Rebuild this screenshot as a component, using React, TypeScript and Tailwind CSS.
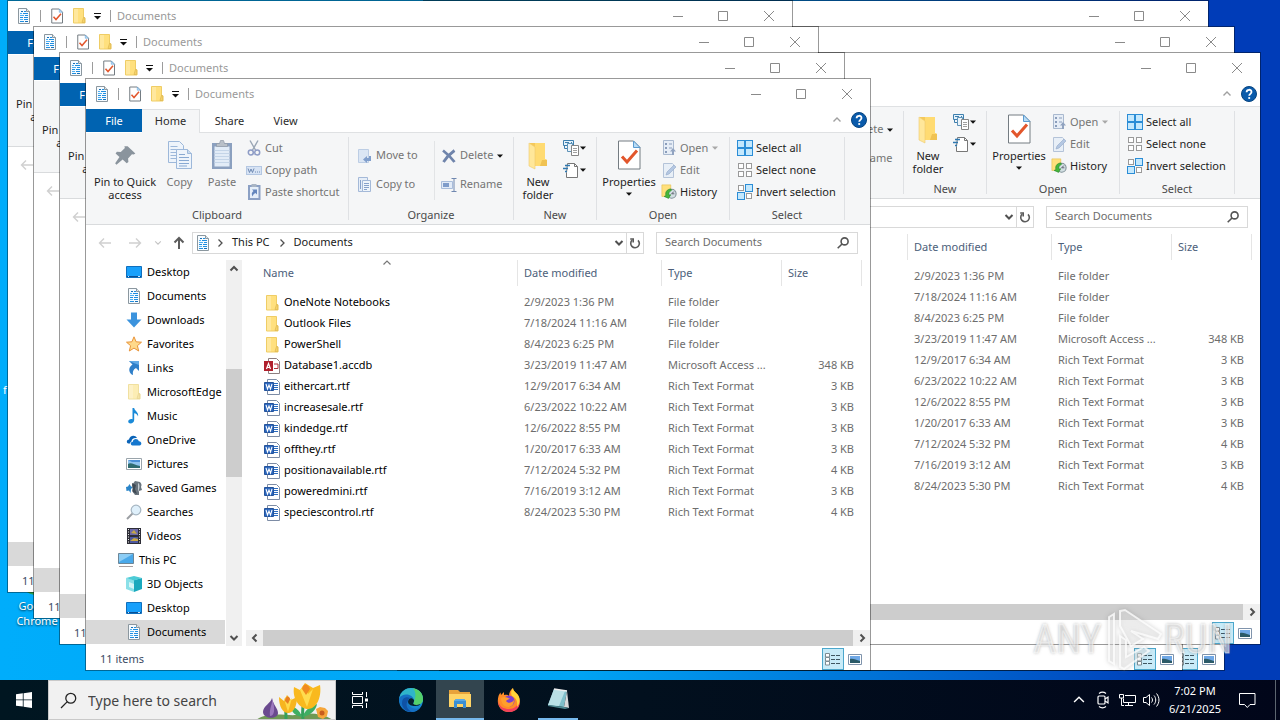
import { useId, type ReactNode } from "react";

const DocIcon = () => (
  <svg width="16" height="16" viewBox="0 0 16 16" aria-hidden="true">
    <path d="M2.500.500h8l3 3v12h-11z" fill="#f6fbff" stroke="#8b979f" />
    <path d="M10.500.500v3h3" fill="#dfe7ec" stroke="#8b979f" />
    <path d="M8 3.500h2M7 5.500h5M9 7.500h3M4 9.500h3M8 9.500h4M8 11.500h4M4 13.500h4" stroke="#1f8ee0" />
    <path d="M4 5.500h2M4 7.500h4M4 11.500h3" stroke="#4fb0f2" />
    <path d="M5 3.500h2M9 13.500h3" stroke="#1670b8" />
  </svg>
);

const CheckDocIcon = ({ size = 16 }: { size?: number }) => (
  <svg width={size} height={size} viewBox="0 0 32 32" aria-hidden="true">
    <path d="M5.500 2h15l6.500 6.500V30H5.500z" fill="#fff" stroke="#747c82" strokeWidth={size > 20 ? 1 : 2} />
    <path d="M20.500 2v6.500H27z" fill="#b9dcf5" stroke="#5b9bd0" />
    <path d="M9 17.500l5 5.500L24 11.500" fill="none" stroke="#e2562c" strokeWidth="3" />
  </svg>
);

const FolderIcon = ({ pale = false }: { pale?: boolean }) => (
  <svg width="16" height="16" viewBox="0 0 16 16" aria-hidden="true">
    <path d="M2.500.500h10v9.500h1.500v5H2.500z" fill={pale ? "#fcedb4" : "#ffe07e"} stroke={pale ? "#f0e0a0" : "#efcd65"} />
    <path d="M12.500 9.500h1.200v5h-2.700z" fill={pale ? "#f6e5a6" : "#f6d36a"} stroke={pale ? "#e6d290" : "#dcb650"} strokeWidth=".7" />
    <path d="M3 1h4v13.500H3z" fill="#fff" opacity=".25" />
  </svg>
);

const BigFolderIcon = () => (
  <svg width="32" height="32" viewBox="0 0 32 32" aria-hidden="true">
    <path d="M8 4h15v16l2 1v6H8z" fill="#f5c95a" />
    <path d="M13 4h10v16l2 1v6H13z" fill="#ffdb72" />
    <path d="M7 4l6 4v22l-6-3z" fill="#ffe79a" stroke="#eecb6d" strokeWidth=".6" />
    <path d="M20 21h5v6h-7z" fill="#f0c252" />
  </svg>
);

const Caret = ({ muted = false }: { muted?: boolean }) => (
  <svg width="6" height="4" viewBox="0 0 6 4" aria-hidden="true">
    <path d="M0 .5h6L3 3.700z" fill={muted ? "#a8a8a8" : "#111"} />
  </svg>
);

const PinIcon = () => (
  <svg width="32" height="32" viewBox="0 0 32 32" aria-hidden="true">
    <path d="M20.500 6l9 8.500-2 1.300-2-.5-4.500 5 .4 4.200-2 1.500-4.700-4.500L7.500 27.500 6 26l5-7.500-4.500-4 1.500-2 4.500.3 4.800-4.600-.6-2.200z" transform="translate(1 2) scale(.86)" fill="#8a949d" />
  </svg>
);

const CopyIcon = () => (
  <svg width="32" height="32" viewBox="0 0 32 32" aria-hidden="true" fill="#eef4fb" stroke="#9db8da">
    <path d="M4.500 2.500h11l4 4v17h-15z" />
    <path d="M6.500 7.500h7M6.500 10.500h9M6.500 13.500h9M6.500 16.500h9M6.500 19.500h9" />
    <path d="M12.500 10.500h11l4 4v15h-15z" />
    <path d="M23.500 10.500v4h4" fill="#c8daee" />
    <path d="M15 15.500h6M15 18.500h10M15 21.500h10M15 24.500h10M15 27h8" stroke="#88a9d2" />
  </svg>
);

const PasteIcon = () => (
  <svg width="32" height="32" viewBox="0 0 32 32" aria-hidden="true">
    <rect x="6" y="4" width="20" height="26" fill="#8ba0bf" />
    <rect x="8.500" y="7.500" width="15" height="20" fill="#e2ecf7" />
    <path d="M8.500 11.500h15M8.500 14.500h15M8.500 17.500h15M8.500 20.500h15M8.500 23.500h15" stroke="#c4d5e8" />
    <path d="M10.500 4.500h3l1-3h3l1 3h3v3h-11z" fill="#b9c0c8" stroke="#8f9aa6" strokeWidth=".7" />
  </svg>
);

const CutIcon = () => (
  <svg width="16" height="16" viewBox="0 0 16 16" aria-hidden="true" fill="none">
    <path d="M4 .500L10 11M12 .500L6 11" stroke="#9aa6b5" strokeWidth="1.400" />
    <circle cx="4.800" cy="12.500" r="2.500" stroke="#8e9cc6" strokeWidth="1.500" />
    <circle cx="11.200" cy="12.500" r="2.500" stroke="#8e9cc6" strokeWidth="1.500" />
  </svg>
);

const CopyPathIcon = () => (
  <svg width="16" height="16" viewBox="0 0 16 16" aria-hidden="true">
    <rect x=".5" y="4.500" width="15" height="8" fill="#d7e3f4" stroke="#b4c7e2" />
    <path d="M2 6.500l1.500 4L5 7l1.500 3.500L8 6.500M9 10h1M11 10h1M13 10h1" fill="none" stroke="#6f8ab3" />
  </svg>
);

const PasteShortcutIcon = () => (
  <svg width="16" height="16" viewBox="0 0 16 16" aria-hidden="true">
    <path d="M3 2h10.500v13H3z" fill="#e6eff9" stroke="#8ba0c4" strokeWidth="2" />
    <path d="M5.500 0h5v3h-5z" fill="#a9b5c4" />
    <path d="M6 5.500h5v5L9.500 9C7.500 10 7 11 6.800 12.500 5.200 10.500 5.500 8.500 7.500 7z" fill="#6486bd" />
  </svg>
);

const MoveToIcon = () => (
  <svg width="16" height="16" viewBox="0 0 16 16" aria-hidden="true">
    <path d="M1.500 1.500h10v13h-10z" fill="#dbe6f4" stroke="#bccde4" />
    <path d="M6 11.500l4-3.500v2h2V8h2v5h-4v2z" fill="#819fcc" />
  </svg>
);

const CopyToIcon = () => (
  <svg width="16" height="16" viewBox="0 0 16 16" aria-hidden="true" stroke="#a4b9d8">
    <path d="M1.500.500h9v14h-9z" fill="#e6eef8" />
    <path d="M5.500 3.500h8v11h-8z" fill="#eff5fb" />
    <path d="M3.500 3v9M7 6.500h5M7 8.500h5M7 10.500h5M7 12.500h3" stroke="#86a1ca" />
  </svg>
);

const DeleteIcon = () => (
  <svg width="16" height="16" viewBox="0 0 16 16" aria-hidden="true">
    <path d="M2 2.500Q8 7 13.500 14M13.500 2.500Q7 7 2.500 14" stroke="#6f84ab" strokeWidth="2.800" fill="none" />
  </svg>
);

const RenameIcon = () => (
  <svg width="16" height="16" viewBox="0 0 16 16" aria-hidden="true">
    <path d="M.5 4.500h11v7H.500z" fill="#e2ebf7" stroke="#a9bddb" />
    <path d="M2 6h6v4H2z" fill="#7f9cca" />
    <path d="M10.500 1.500h5M13 1.500v13M10.500 14.500h5" stroke="#7088b0" />
  </svg>
);

const NewItemIcon = () => (
  <svg width="16" height="16" viewBox="0 0 16 16" aria-hidden="true">
    <path d="M.5.500h10v5H.500z" fill="#e4f2fb" stroke="#3d7fae" />
    <path d="M2 2.500h4M8 2.500h1M1.500 5.500v3h3" stroke="#3d7fae" fill="none" />
    <path d="M4.500 3.500h5v8h-5z" fill="#eaf4fb" stroke="#5f93b8" />
    <path d="M8.500 5.500h7v10h-7z" fill="#fff" stroke="#858585" />
    <path d="M10 8.500h4M10 10.500h4M10 12.500h4" stroke="#a0a0a0" />
  </svg>
);

const EasyAccessIcon = () => (
  <svg width="16" height="16" viewBox="0 0 16 16" aria-hidden="true">
    <path d="M4.500 1.500h7l3 3v11h-11v-5z" fill="#fff" stroke="#777" />
    <path d="M11.500 1.500v3h3" fill="none" stroke="#777" />
    <path d="M2 3.500h5M0 6.500h5M2 9.500h2" stroke="#2f78b0" strokeWidth="1.300" />
  </svg>
);

const OpenIcon = () => (
  <svg width="16" height="16" viewBox="0 0 16 16" aria-hidden="true">
    <path d="M2.500.500h10v14h-10z" fill="#e6edf6" stroke="#a9b9cf" />
    <path d="M4 3h2v2H4zM4 7h2v2H4zM4 11h2v2H4z" fill="#8a9dbb" />
    <path d="M8 4h3M8 8h3" stroke="#8a9dbb" />
    <path d="M11 15v-3.500H9L12 8l3 3.500h-2V15z" fill="#91a3c0" />
  </svg>
);

const EditIcon = () => (
  <svg width="16" height="16" viewBox="0 0 16 16" aria-hidden="true">
    <path d="M2.500 1.500h9l1 1v13h-10z" fill="#e8eff7" stroke="#b4c3d8" />
    <path d="M5 13l1-3 7-7 2 2-7 7z" fill="#b4c7e2" stroke="#93a9c9" strokeWidth=".6" />
  </svg>
);

const HistoryIcon = () => (
  <svg width="18" height="16" viewBox="0 0 18 16" aria-hidden="true">
    <path d="M1 0h10v13H1z" fill="#ffe07c" stroke="#e5bf50" strokeWidth=".7" />
    <circle cx="12" cy="10" r="5" fill="#d3dfe3" stroke="#7e8f96" strokeWidth="1.200" />
    <path d="M12 10l2.500-2.500M12 10h3" stroke="#556" />
    <path d="M11 4.500C6.500 5 4.500 8 5.500 12l-2 1 5 2.200L11 11l-2 .5C8.500 9.500 9 7.500 12 6z" fill="#45b53b" stroke="#1f8326" strokeWidth=".6" />
  </svg>
);

function SelectIcon({ filled }: { filled: [boolean, boolean, boolean, boolean] }) {
  const cells = [[0, 0], [8, 0], [0, 8], [8, 8]];
  return (
    <svg width="16" height="16" viewBox="0 0 16 16" aria-hidden="true">
      {cells.map(([x, y], i) =>
        filled[i] ? (
          <rect key={i} x={x + 0.5} y={y + 0.5} width="7" height="7" fill="#c4e8fd" stroke="#2b8dd6" />
        ) : (
          <rect key={i} x={x + 1.5} y={y + 1.5} width="5" height="5" fill="#fff" stroke="#9a9a9a" />
        ),
      )}
    </svg>
  );
}

const HelpIcon = () => (
  <svg width="16" height="16" viewBox="0 0 16 16" aria-hidden="true">
    <circle cx="8" cy="8" r="7.500" fill="#0a5bab" stroke="#07447f" />
    <path d="M5.600 6.200C5.600 3 10.500 3 10.500 6c0 1.800-2.300 1.900-2.300 3.800" fill="none" stroke="#fff" strokeWidth="1.800" />
    <circle cx="8.200" cy="12" r="1.100" fill="#fff" />
  </svg>
);

const MagnifierIcon = ({ size = 12, color = "#555", width = 1.6 }: { size?: number; color?: string; width?: number }) => (
  <svg width={size} height={size} viewBox="0 0 12 12" aria-hidden="true" fill="none" stroke={color} strokeWidth={width}>
    <circle cx="7.600" cy="4.400" r="3.500" />
    <path d="M5 7L.7 11.300" />
  </svg>
);

type Dir = "up" | "down" | "left" | "right";
const chevronPaths: Record<Dir, string> = {
  up: "M1.500 6.500L5 3l3.500 3.500",
  down: "M1.500 3L5 6.500 8.500 3",
  left: "M6.500 1.500L3 5l3.500 3.500",
  right: "M3.500 1.500L7 5 3.500 8.500",
};
const Chevron = ({ dir, color = "#505050", width = 2, size = 10 }: { dir: Dir; color?: string; width?: number; size?: number }) => (
  <svg width={size} height={size} viewBox="0 0 10 10" aria-hidden="true">
    <path d={chevronPaths[dir]} fill="none" stroke={color} strokeWidth={width} />
  </svg>
);

const Arrow = ({ d, color, width }: { d: string; color: string; width: number }) => (
  <svg width="14" height="14" viewBox="0 0 14 14" aria-hidden="true">
    <path d={d} fill="none" stroke={color} strokeWidth={width} />
  </svg>
);

const DesktopIcon = () => (
  <svg width="16" height="16" viewBox="0 0 16 16" aria-hidden="true">
    <path d="M.5 2.500h15v11H.500z" fill="#18a0fb" stroke="#0f6fbd" />
    <path d="M1 12.500h14" stroke="#0a4f94" />
    <path d="M2 12.500h1M12 12.500h2" stroke="#cfe8fb" />
  </svg>
);
const DownloadIcon = () => (
  <svg width="16" height="16" viewBox="0 0 16 16" aria-hidden="true">
    <path d="M5 .5h6v7h4.500L8 15.500.5 7.500H5z" fill="#3b93dd" />
  </svg>
);
const StarIcon = () => (
  <svg width="16" height="16" viewBox="0 0 16 16" aria-hidden="true">
    <path d="M8 .8l2.100 5 5.400.4-4.100 3.500 1.300 5.300L8 12.100 3.300 15l1.300-5.300L.5 6.200l5.400-.4z" fill="#ffd98a" stroke="#e8943a" />
  </svg>
);
const LinksIcon = () => (
  <svg width="16" height="16" viewBox="0 0 16 16" aria-hidden="true">
    <path d="M3 1h10v10l-3-3c-3 1.500-3.500 4-3 7C3.500 14 1 8 6.500 4.500z" fill="#2f7fc9" />
    <path d="M3 1h10v4L9 3.500z" fill="#62aae6" />
  </svg>
);
const MusicIcon = () => (
  <svg width="16" height="16" viewBox="0 0 16 16" aria-hidden="true">
    <path d="M6.500 0h1.700c.3 3 4.800 4 3.800 8.500-.4-2-2-3-3.800-3.300V12c0 4-6 4.500-6 1.500 0-2 2.500-3 4.300-2.300z" fill="#1a8ad8" />
  </svg>
);
const OneDriveIcon = () => (
  <svg width="16" height="16" viewBox="0 0 16 16" aria-hidden="true">
    <path d="M2.500 11.500C0 11 .5 7.500 3 7.500 3.500 3.500 9 2 11 6 7.500 5.500 5.500 7 5.500 9.500c-1 .3-1.500 1.200-1.200 2z" fill="#0b64b8" />
    <path d="M6.500 13.500c-2.500-.5-2-3.800.3-3.800.3-3.500 5.200-3.700 6-.5 3-.2 3.400 4 .8 4.300z" fill="#1577ce" />
  </svg>
);
const PicturesIcon = () => (
  <svg width="16" height="16" viewBox="0 0 16 16" aria-hidden="true">
    <path d="M.5 2.500h15v11H.500z" fill="#fff" stroke="#9aa4ab" />
    <path d="M2 4h12v8H2z" fill="#8fc3ee" />
    <path d="M2 8c3-2 6 1 12 2v2H2z" fill="#2f6c70" />
    <path d="M2 4h12v2H6z" fill="#4a8fd6" />
  </svg>
);
const GamesIcon = () => (
  <svg width="16" height="16" viewBox="0 0 16 16" aria-hidden="true">
    <path d="M0 7l2-.500 1.500-2.500 1.500 2.500 2 .5-2 2L4.500 13 3 10.500.500 11z" fill="#2a85c9" />
    <path d="M9 1l5 1c1.500 1.500 2 3 1 5l1 3-3 1v4H9l-3-4 1-3-1-3z" fill="#69747d" />
    <path d="M6 3l4 2-1 4 2 5-4-2z" fill="#3f4a54" />
    <path d="M12 3c2 1 2 5 0 9z" fill="#c6ced4" />
  </svg>
);
const SearchesIcon = () => (
  <svg width="16" height="16" viewBox="0 0 16 16" aria-hidden="true">
    <path d="M7 9L1 15" stroke="#9b9fa3" strokeWidth="2" />
    <circle cx="10" cy="6" r="4.800" fill="#dff0fb" stroke="#a6b6c2" strokeWidth="1.200" />
  </svg>
);
const VideosIcon = () => (
  <svg width="16" height="16" viewBox="0 0 16 16" aria-hidden="true">
    <path d="M1 0h14v16H1z" fill="#2d2d36" />
    <path d="M2.500 1v15M13.500 1v15" stroke="#eee" strokeDasharray="1 1.500" />
    <path d="M4 1h8v6H4z" fill="#6d6aa8" />
    <path d="M4 9h8v6H4z" fill="#4e58a0" />
    <path d="M5 5l3-3 3 4zM4 13l4-3 4 1v2z" fill="#c8a843" />
  </svg>
);
const ThisPcIcon = () => (
  <svg width="16" height="16" viewBox="0 0 16 16" aria-hidden="true">
    <path d="M.5 1.500h15v10H.500z" fill="#4aa9ea" stroke="#6d8798" />
    <path d="M1 2h14L1 10z" fill="#8ccdf5" />
    <path d="M1 14.500h14" stroke="#a8a0a0" />
  </svg>
);
const CubeIcon = () => (
  <svg width="16" height="16" viewBox="0 0 16 16" aria-hidden="true">
    <path d="M0 2l8 2v12l-8-3z" fill="#8be0e8" />
    <path d="M8 4l8-2v11l-8 3z" fill="#1ba9bd" />
    <path d="M0 2l8-2 8 2-8 2.500z" fill="#4ccbd6" />
    <path d="M3 6l5 2v5l-5-2z" fill="#d6f6f8" />
  </svg>
);

const WordIcon = () => (
  <svg width="16" height="16" viewBox="0 0 16 16" aria-hidden="true">
    <path d="M3.500.500h9l3 3v12h-12z" fill="#fff" stroke="#7d8ca5" />
    <path d="M10 4.500h4M10 6.500h4M10 8.500h4M10 10.500h4" stroke="#2b6cc0" />
    <path d="M.5 3.500h9v8H.500z" fill="#2b66bd" stroke="#24539b" />
    <path d="M2 5L3.500 10 5 6l1.500 4L8 5" fill="none" stroke="#fff" strokeWidth="1.100" />
  </svg>
);
const AccessIcon = () => (
  <svg width="16" height="16" viewBox="0 0 16 16" aria-hidden="true">
    <path d="M4.500.500h8l3 3v12h-11z" fill="#fff" stroke="#8c7f80" />
    <path d="M10 6h4v4.500h-4" stroke="#b0303a" fill="none" />
    <path d="M0 3h9v10H0z" fill="#b0202d" />
    <path d="M2.500 11l2-5.500 2 5.500M3 9.500h3" fill="none" stroke="#fff" strokeWidth="1.200" />
  </svg>
);

const treeItems: { label: string; icon: ReactNode; root?: boolean; selected?: boolean }[] = [
  { label: "Desktop", icon: <DesktopIcon /> },
  { label: "Documents", icon: <DocIcon /> },
  { label: "Downloads", icon: <DownloadIcon /> },
  { label: "Favorites", icon: <StarIcon /> },
  { label: "Links", icon: <LinksIcon /> },
  { label: "MicrosoftEdge", icon: <FolderIcon pale /> },
  { label: "Music", icon: <MusicIcon /> },
  { label: "OneDrive", icon: <OneDriveIcon /> },
  { label: "Pictures", icon: <PicturesIcon /> },
  { label: "Saved Games", icon: <GamesIcon /> },
  { label: "Searches", icon: <SearchesIcon /> },
  { label: "Videos", icon: <VideosIcon /> },
  { label: "This PC", icon: <ThisPcIcon />, root: true },
  { label: "3D Objects", icon: <CubeIcon /> },
  { label: "Desktop", icon: <DesktopIcon /> },
  { label: "Documents", icon: <DocIcon />, selected: true },
];

const files: [string, string, string, string][] = [
  ["OneNote Notebooks", "2/9/2023 1:36 PM", "File folder", ""],
  ["Outlook Files", "7/18/2024 11:16 AM", "File folder", ""],
  ["PowerShell", "8/4/2023 6:25 PM", "File folder", ""],
  ["Database1.accdb", "3/23/2019 11:47 AM", "Microsoft Access ...", "348 KB"],
  ["eithercart.rtf", "12/9/2017 6:34 AM", "Rich Text Format", "3 KB"],
  ["increasesale.rtf", "6/23/2022 10:22 AM", "Rich Text Format", "3 KB"],
  ["kindedge.rtf", "12/6/2022 8:55 PM", "Rich Text Format", "3 KB"],
  ["offthey.rtf", "1/20/2017 6:33 AM", "Rich Text Format", "3 KB"],
  ["positionavailable.rtf", "7/12/2024 5:32 PM", "Rich Text Format", "4 KB"],
  ["poweredmini.rtf", "7/16/2019 3:12 AM", "Rich Text Format", "3 KB"],
  ["speciescontrol.rtf", "8/24/2023 5:30 PM", "Rich Text Format", "4 KB"],
];

function fileIcon(name: string) {
  if (name.endsWith(".rtf")) return <WordIcon />;
  if (name.endsWith(".accdb")) return <AccessIcon />;
  return <FolderIcon />;
}

function BigButton({ icon, label, className }: { icon: ReactNode; label: string; className: string }) {
  return (
    <button type="button" className={`flex flex-col items-center gap-1 pt-[6px] text-center leading-[13px] ${className}`}>
      {icon}
      <span>{label}</span>
    </button>
  );
}

function SmallButton({ icon, label, tall = false, muted = false, caret = false }: { icon: ReactNode; label: string; tall?: boolean; muted?: boolean; caret?: boolean }) {
  return (
    <button type="button" className={`flex items-center gap-[3px] whitespace-nowrap ${tall ? "h-[29px]" : "h-[22px]"} ${muted ? "text-[#747474]" : "text-[#1e1e1e]"}`}>
      <span className="flex w-4 justify-center">{icon}</span>
      {label}
      {caret && <span className="pl-px"><Caret muted={label === "Open"} /></span>}
    </button>
  );
}

function Group({ title, className, children }: { title: string; className: string; children: ReactNode }) {
  return (
    <section className={`flex shrink-0 flex-col ${className}`}>
      <div className="flex h-[75px]">{children}</div>
      <h3 className="text-center leading-[14px] text-[#4a4a4a]">{title}</h3>
    </section>
  );
}

const Divider = () => <div className="my-1 w-px shrink-0 bg-[#dfe1e4]" />;

const PinButton = () => (
  <BigButton icon={<PinIcon />} label="Pin to Quick access" className="ml-[6px] w-[66px] shrink-0 text-[#1e1e1e]" />
);

function RibbonGroups() {
  return (
    <>
      <Group title="Clipboard" className="w-[262px]">
        <PinButton />
        <BigButton icon={<CopyIcon />} label="Copy" className="w-[43px] text-[#747474]" />
        <BigButton icon={<PasteIcon />} label="Paste" className="w-[42px] text-[#747474]" />
        <div className="ml-[3px] pt-1">
          <SmallButton icon={<CutIcon />} label="Cut" muted />
          <SmallButton icon={<CopyPathIcon />} label="Copy path" muted />
          <SmallButton icon={<PasteShortcutIcon />} label="Paste shortcut" muted />
        </div>
      </Group>
      <Divider />
      <Group title="Organize" className="w-[164px]">
        <div className="w-[85px] pt-2 pl-2">
          <SmallButton icon={<MoveToIcon />} label="Move to" tall muted />
          <SmallButton icon={<CopyToIcon />} label="Copy to" tall muted />
        </div>
        <div className="my-2 border-l border-[#e2e4e6] pl-[6px]">
          <SmallButton icon={<DeleteIcon />} label="Delete" tall muted caret />
          <SmallButton icon={<RenameIcon />} label="Rename" tall muted />
        </div>
      </Group>
      <Divider />
      <Group title="New" className="w-[82px]">
        <BigButton icon={<BigFolderIcon />} label="New folder" className="ml-1 w-10 text-[#1e1e1e]" />
        <div className="ml-[5px] pt-1">
          <button type="button" aria-label="New item" className="flex h-[22px] items-center gap-px">
            <NewItemIcon /><Caret />
          </button>
          <button type="button" aria-label="Easy access" className="flex h-[22px] items-center gap-px">
            <EasyAccessIcon /><Caret />
          </button>
        </div>
      </Group>
      <Divider />
      <Group title="Open" className="w-[132px]">
        <button type="button" className="ml-[2px] flex w-[60px] flex-col items-center gap-1 pt-[6px] leading-[13px] text-[#1e1e1e]">
          <CheckDocIcon size={32} />
          Properties
          <Caret />
        </button>
        <div className="ml-[2px] pt-1">
          <SmallButton icon={<OpenIcon />} label="Open" muted caret />
          <SmallButton icon={<EditIcon />} label="Edit" muted />
          <SmallButton icon={<HistoryIcon />} label="History" />
        </div>
      </Group>
      <Divider />
      <Group title="Select" className="w-[114px]">
        <div className="ml-[7px] pt-1">
          <SmallButton icon={<SelectIcon filled={[true, true, true, true]} />} label="Select all" />
          <SmallButton icon={<SelectIcon filled={[false, false, false, false]} />} label="Select none" />
          <SmallButton icon={<SelectIcon filled={[false, true, true, false]} />} label="Invert selection" />
        </div>
      </Group>
      <Divider />
    </>
  );
}

function AddressBar({ searchId }: { searchId: string }) {
  return (
    <>
      <button type="button" aria-label="Forward" className="ml-4"><Arrow d="M1 7h11M8 2.500L12.500 7 8 11.500" color="#d0d0d0" width={1.4} /></button>
      <button type="button" aria-label="Recent locations" className="ml-3"><Chevron dir="down" color="#c4c4c4" width={1.4} size={8} /></button>
      <button type="button" aria-label="Up" className="ml-[10px]"><Arrow d="M7 13V2M2.500 6.500L7 2l4.500 4.500" color="#5c5c5c" width={2} /></button>
      <div className="ml-[6px] flex h-[22px] flex-1 items-center border border-[#d9d9d9] pl-[2px] text-[#1a1a1a]">
        <DocIcon />
        <span className="ml-1 flex"><Chevron dir="right" width={1.3} /></span>
        <a href="#this-pc" className="ml-[7px]">This PC</a>
        <span className="ml-[7px] flex"><Chevron dir="right" width={1.3} /></span>
        <a href="#documents" className="ml-[7px] flex-1">Documents</a>
        <button type="button" aria-label="Previous locations" className="flex w-[14px] justify-center"><Chevron dir="down" /></button>
        <button type="button" aria-label="Refresh" className="flex h-full w-[17px] items-center justify-center border-l border-[#d9d9d9]">
          <svg width="12" height="12" viewBox="0 0 12 12" aria-hidden="true" fill="none" stroke="#5a5a5a" strokeWidth="1.600">
            <path d="M9 3.300A4.300 4.300 0 1 1 3.200 3.200" /><path d="M1.200 2h3v3.600" />
          </svg>
        </button>
      </div>
      <div className="ml-3 flex h-[22px] w-[202px] items-center border border-[#d9d9d9] pr-2 pl-2">
        <label htmlFor={searchId} className="sr-only">Search</label>
        <input id={searchId} type="search" placeholder="Search Documents" className="min-w-0 flex-1 bg-transparent outline-none placeholder:text-[#6d6d6d]" />
        <MagnifierIcon />
      </div>
    </>
  );
}

function FileTable() {
  return (
    <table className="w-[616px] table-fixed border-separate border-spacing-0 text-left text-[#6d6d6d]">
      <colgroup>
        <col className="w-[272px]" /><col className="w-[144px]" /><col className="w-[120px]" /><col className="w-20" />
      </colgroup>
      <thead className="text-[#4c607a]">
        <tr className="h-8 align-top">
          <th className="relative p-0 font-normal">
            <span className="absolute top-0 left-[136px] flex h-[5px] items-center"><Chevron dir="up" color="#777" width={1.2} /></span>
            <div className="flex h-[26px] items-center border-r border-[#e5e5e5] pl-[17px]">Name</div>
          </th>
          <th className="p-0 font-normal"><div className="flex h-[26px] items-center border-r border-[#e5e5e5] pl-[6px]">Date modified</div></th>
          <th className="p-0 font-normal"><div className="flex h-[26px] items-center border-r border-[#e5e5e5] pl-[6px]">Type</div></th>
          <th className="p-0 font-normal"><div className="flex h-[26px] items-center border-r border-[#e5e5e5] pl-[6px]">Size</div></th>
        </tr>
      </thead>
      <tbody>
        {files.map(([name, date, type, size]) => (
          <tr key={name} className="h-[21px]">
            <td className="p-0 pl-[18px] text-black"><span className="flex h-[21px] items-center gap-1">{fileIcon(name)}{name}</span></td>
            <td className="p-0 pl-[6px]">{date}</td>
            <td className="p-0 pl-[6px]">{type}</td>
            <td className="p-0 pr-2 text-right">{size}</td>
          </tr>
        ))}
      </tbody>
    </table>
  );
}

/** `frameOnly` skips the file list and most of the ribbon for windows that sit deep in the stack. */
function ExplorerWindow({ place, frameOnly = false }: { place: string; frameOnly?: boolean }) {
  const searchId = useId();
  return (
    <article className={`absolute flex h-[593px] w-[786px] flex-col overflow-hidden border border-black/40 bg-white bg-clip-padding text-[11px] ${place}`}>
      <header className="flex h-[30px] shrink-0 items-center pl-2">
        <DocIcon />
        <span className="ml-2 h-3 w-px bg-[#9c9c9c]" />
        <span className="ml-2"><CheckDocIcon /></span>
        <span className="ml-[6px]"><FolderIcon /></span>
        <button type="button" aria-label="Customize toolbar" className="ml-[7px]">
          <svg width="8" height="8" viewBox="0 0 8 8" aria-hidden="true"><path d="M0 1.500h7" stroke="#111" /><path d="M0 4h7L3.500 7.500z" fill="#111" /></svg>
        </button>
        <span className="ml-2 h-3 w-px bg-[#9c9c9c]" />
        <h2 className="ml-[6px] flex-1 text-[#999]">Documents</h2>
        <button type="button" aria-label="Minimize" className="flex w-11 justify-center">
          <svg width="10" height="10" viewBox="0 0 10 10" aria-hidden="true"><path d="M0 5.500h10" stroke="#8a8a8a" /></svg>
        </button>
        <button type="button" aria-label="Maximize" className="flex w-[46px] justify-center">
          <svg width="10" height="10" viewBox="0 0 10 10" aria-hidden="true"><path d="M.5.500h9v9h-9z" fill="none" stroke="#8a8a8a" /></svg>
        </button>
        <button type="button" aria-label="Close" className="flex w-[46px] justify-center">
          <svg width="10" height="10" viewBox="0 0 10 10" aria-hidden="true"><path d="M0 0l10 10M10 0L0 10" stroke="#8a8a8a" /></svg>
        </button>
      </header>

      <nav className="flex h-6 shrink-0 items-stretch text-[#2b2b2b]">
        <button type="button" className="mb-px w-14 bg-[#0063b1] pt-px text-white">File</button>
        {!frameOnly && (
          <>
            <button type="button" className="w-[58px] border-t border-r border-[#dfe1e3] bg-[#f5f6f7]">Home</button>
            <button type="button" className="w-[59px] border-b border-[#dfe1e3] pt-px">Share</button>
            <button type="button" className="w-[53px] border-b border-[#dfe1e3] pt-px">View</button>
          </>
        )}
        <div className="flex flex-1 items-center justify-end gap-[9px] border-b border-[#dfe1e3] pr-[3px] pb-px">
          <button type="button" aria-label="Collapse ribbon"><Chevron dir="up" color="#a0a0a0" width={1.4} /></button>
          <button type="button" aria-label="Help"><HelpIcon /></button>
        </div>
      </nav>

      <div className="flex h-[92px] shrink-0 border-b border-[#d9dbdd] bg-[#f5f6f7]">
        {frameOnly ? <PinButton /> : <RibbonGroups />}
      </div>

      <div className="flex h-[35px] shrink-0 items-center px-3">
        <button type="button" aria-label="Back"><Arrow d="M13 7H2M6 2.500L1.500 7 6 11.500" color="#d0d0d0" width={1.4} /></button>
        {!frameOnly && <AddressBar searchId={searchId} />}
      </div>

      <div className="flex h-[386px] shrink-0">
        {frameOnly ? (
          <div className="mb-[2px] h-6 w-[139px] self-end bg-[#d9d9d9]" />
        ) : (
          <>
            <ul className="w-[139px] shrink-0 overflow-hidden text-black">
              {treeItems.map((item, i) => (
                <li key={i}>
                  <button type="button" className={`flex h-6 w-full items-center gap-[5px] whitespace-nowrap ${item.root ? "pl-8" : "pl-10"} ${item.selected ? "bg-[#d9d9d9]" : ""}`}>
                    <span className="shrink-0">{item.icon}</span>
                    {item.label}
                  </button>
                </li>
              ))}
            </ul>
            <div className="ml-px flex w-4 shrink-0 flex-col items-center bg-[#f0f0f0]">
              <button type="button" aria-label="Scroll up" className="flex h-[17px] items-center"><Chevron dir="up" /></button>
              <div className="mt-[92px] h-[108px] w-full bg-[#cdcdcd]" />
              <button type="button" aria-label="Scroll down" className="mt-auto flex h-[17px] items-center"><Chevron dir="down" /></button>
            </div>
            <div className="flex min-w-0 flex-1 flex-col pl-1">
              <FileTable />
              <div className="mt-auto flex h-4 items-center bg-[#f0f0f0]">
                <button type="button" aria-label="Scroll left" className="flex w-[17px] justify-center"><Chevron dir="left" /></button>
                <div className="h-full flex-1 bg-[#cdcdcd]" />
                <button type="button" aria-label="Scroll right" className="flex w-[17px] justify-center"><Chevron dir="right" /></button>
              </div>
            </div>
          </>
        )}
      </div>

      <footer className="flex flex-1 items-center pt-[2px] pr-2 pl-[14px] text-[#3a4a63]">
        <p className="flex-1">11 items</p>
        <button type="button" aria-label="Details view" className="flex h-full w-[22px] items-center justify-center border border-[#4ba7cc] bg-[#c8ebf8]">
          <svg width="16" height="13" viewBox="0 0 16 13" aria-hidden="true">
            <path d="M.5.500h4v3.500h-4zM.5 4.500h4V8h-4zM.5 8.500h4V12h-4z" fill="#fff" stroke="#7c8c93" />
            <path d="M6 2.500h4M11 2.500h4M6 6.500h4M11 6.500h4M6 10.500h4M11 10.500h4" stroke="#3f5661" />
          </svg>
        </button>
        <button type="button" aria-label="Large icons view" className="ml-1">
          <svg width="14" height="11" viewBox="0 0 14 11" aria-hidden="true">
            <path d="M.5.500h13v10H.500z" fill="#fff" stroke="#8094ac" />
            <path d="M2 2h10v7H2z" fill="#6fa8e6" /><path d="M2 5c3-1 6 1 10 2v2H2z" fill="#2b5a68" />
          </svg>
        </button>
      </footer>
    </article>
  );
}

const windows: { place: string; frameOnly?: boolean }[] = [
  { place: "left-[439px] top-[78px]", frameOnly: true },
  { place: "left-[397px] top-[78px]", frameOnly: true },
  { place: "left-[423px] top-0", frameOnly: true },
  { place: "left-[449px] top-[26px]", frameOnly: true },
  { place: "left-[475px] top-[52px]" },
  { place: "left-[7px] top-0", frameOnly: true },
  { place: "left-[33px] top-[26px]", frameOnly: true },
  { place: "left-[59px] top-[52px]", frameOnly: true },
  { place: "left-[85px] top-[78px]" },
];

function Watermark() {
  return (
    <div className="pointer-events-none absolute right-12 bottom-2 flex items-center text-[40px] leading-[60px] font-normal text-white/50 [font-family:'Roboto_Condensed','Liberation_Sans_Narrow','Liberation_Sans',sans-serif] [-webkit-text-stroke:1px_rgba(255,255,255,0.5)] [text-shadow:0_0_3px_rgba(110,110,110,0.6)]">
      <span>ANY</span>
      <svg width="62" height="64" viewBox="0 0 62 64" aria-hidden="true" fill="rgba(245,245,245,.35)" stroke="#fff" strokeOpacity=".75" strokeWidth="2" className="drop-shadow-[0_0_2px_rgba(120,120,120,0.5)]">
        <path d="M7 9l5-3v50l-5-3z" />
        <path d="M18 3l5-1 36 24-3 5-27-8 12 8-12 7-11-20z" />
        <path d="M18 28l6 4v17l18-10 5 4-25 18-4-2z" />
      </svg>
      <span>RUN</span>
    </div>
  );
}

const WindowsLogo = () => (
  <svg width="16" height="16" viewBox="0 0 16 16" aria-hidden="true" fill="#fff">
    <path d="M0 2.200l6.800-.9v6.200H0zM7.600 1.200L16 0v7.500H7.600zM0 8.300h6.800v6.300L0 13.700zM7.600 8.300H16V16l-8.400-1.200z" />
  </svg>
);

const Flowers = () => (
  <svg width="82" height="38" viewBox="0 0 82 38" aria-hidden="true">
    <path d="M3 39c12-9 30-4 40-5 14-3 28-1 37 5z" fill="#6f9a55" />
    <path d="M33 39c0-7 0-10-1-16M50 38c-1-9 0-14 1-18" stroke="#35a05b" strokeWidth="3" fill="none" />
    <path d="M50 36c1-6 7-11 14-13-1 6-6 11-14 13zM49 36c-2-7-8-11-12-11 1 6 6 10 12 11z" fill="#3fae62" />
    <path d="M19 17c-1 5-9 8-9 14 0 7 15 8 15 1 0-5-5-8-6-15z" fill="#6a4a8f" />
    <path d="M19 17c1 6-3 10-2 18 4 0 6-6 2-18z" fill="#9a77bd" />
    <path d="M26 16l5 4 3-6 4 5 6-3c0 10-4 16-9 16s-9-6-9-16z" fill="#f7b51f" />
    <path d="M31 18l4 13 4-14-3 3-2-5z" fill="#ffd94a" />
    <path d="M32 20c0-5 4-6 5-2l-2 5z" fill="#e87e22" />
    <path d="M41 6l6 3 5-7 8 5 7-3c2 13-4 24-12 24S39 18 41 6z" fill="#f9b91e" />
    <path d="M47 9l7 17 6-18-5 5-4-8z" fill="#ffdc4e" />
    <path d="M49 8c1-6 6-6 8 0l-4 6z" fill="#f08a1f" />
    <path d="M63 28l4-2 5 1 3 3-1 5-4 3-5-2z" fill="#f6a63a" />
    <circle cx="69" cy="32" r="2.500" fill="#c75d1d" />
  </svg>
);

const TaskViewIcon = () => (
  <svg width="17" height="17" viewBox="0 0 17 17" aria-hidden="true" fill="none" stroke="#fff">
    <path d="M.5 4.500h10v7H.500zM.5 0v2.500h10V0M.5 16v-2.500h10V16M14.500 0v5M14.500 11v5" />
    <path d="M13 6.500h3v3h-3z" fill="#fff" stroke="none" />
  </svg>
);

const EdgeIcon = () => (
  <svg width="24" height="24" viewBox="0 0 24 24" aria-hidden="true">
    <circle cx="12" cy="12" r="12" fill="#1787d0" />
    <path d="M.3 10C2 3 7 0 12 0c7 0 12 5 12 11 0 4-3 6-7 6-3 0-3-1-2-3 .7-3-2-6-6-6-4 0-7 1-8.700 2z" fill="#2fb5c9" />
    <path d="M14 .2c6 1 10 5 10 10.800 0 4-3 6-7 6-3 0-3-1-2-3 1-4 3-9-1-13.800z" fill="#54d06b" />
    <path d="M.3 10C3 5 13 5 15 12c-2-3-6-2-6 2 0 5 6 8 12 6-3 3.500-8 5-12 3.600C4 22-.5 16 .3 10z" fill="#1570c4" />
    <path d="M9 14c0-4 4-5 6-2 .6 1-.8 2.500-.8 3.500 0 1.500 3.800 2 6.800.5 1 2-11 4-12-2z" fill="#06202f" />
    <path d="M9 13c-3 3-1 9 4 11C7 24 3 20 3 15s4-7 8-5c-1 .5-2 2-2 3z" fill="#0f52a5" />
  </svg>
);

const ExplorerIcon = () => (
  <svg width="24" height="20" viewBox="0 0 24 20" aria-hidden="true">
    <path d="M1 1h9l2 2h10v6H1z" fill="#e8a33a" />
    <path d="M1 5h22v13H1z" fill="#ffd466" />
    <path d="M6 19v-7l2-2h8l2 2v7h-3v-4H9v4z" fill="#3c8fd3" />
    <path d="M6 12l2-2h8l2 2z" fill="#5aaae6" />
  </svg>
);

const FirefoxIcon = () => (
  <svg width="24" height="24" viewBox="0 0 24 24" aria-hidden="true">
    <path d="M12 24C5 24 .8 19 .8 13 .8 9 2 6 3.500 4.500L4 7l3-3v3c2-.5 4-.5 5 1 0-3 1-6 4-8 0 4 5 5 6 9 3 8-3 15-10 15z" fill="#ff8b27" />
    <path d="M1 12c1 7 6 9 11 9s9-3 10.500-9C24 19 19 24 12 24S1 19 1 12z" fill="#f3405c" />
    <path d="M16 0c0 4 5 5 6 9 1.500 4 0 8-2 10 1-6-1-9-5-11-1.500-2-1-6 1-8z" fill="#ffd43a" />
    <circle cx="12" cy="13" r="5.500" fill="#7a3fd0" />
    <path d="M4 10c3-2 6-1 9 1-2 0-3 1-4 2 2 3 6 2 8-1 0 5-3 7-6 7-4 0-7-4-7-9z" fill="#ff9e2c" />
  </svg>
);

const NotepadIcon = () => (
  <svg width="24" height="24" viewBox="0 0 24 24" aria-hidden="true">
    <path d="M8 2l13 2-3 16-16-2z" fill="#7fbfca" />
    <path d="M8 2l11 2-6 15-11-1z" fill="#b9e0e6" />
    <path d="M21 4l2 17-5-1z" fill="#d9dadb" />
    <path d="M2 18l16 2 5 1-4 1-17-3z" fill="#4f8a93" />
    <path d="M8 2l13 2" stroke="#eee" strokeWidth="1.500" />
  </svg>
);

function Taskbar() {
  return (
    <footer className="flex h-10 shrink-0 items-stretch bg-linear-to-r from-[#001621] via-[#02101e] to-[#01061a] text-white">
      <button type="button" aria-label="Start" className="flex w-12 items-center justify-center"><WindowsLogo /></button>
      <div className="flex w-[288px] items-center border border-[#c9c9c9] bg-[#f1f1f1] pl-[11px]">
        <MagnifierIcon size={17} color="#222" width={0.9} />
        <label htmlFor="taskbar-search" className="sr-only">Type here to search</label>
        <input id="taskbar-search" type="text" placeholder="Type here to search" className="ml-[11px] min-w-0 flex-1 bg-transparent text-[14px] outline-none placeholder:text-[#444]" />
        <Flowers />
      </div>
      <button type="button" aria-label="Task view" className="flex w-12 items-center justify-center"><TaskViewIcon /></button>
      <button type="button" aria-label="Microsoft Edge" className="flex w-[52px] items-center justify-center pl-[2px]"><EdgeIcon /></button>
      <button type="button" aria-label="File Explorer" className="flex w-12 items-center justify-center border-b-2 border-[#76b9ed] bg-[#33454f]"><ExplorerIcon /></button>
      <button type="button" aria-label="Firefox" className="flex w-[50px] items-center justify-center"><FirefoxIcon /></button>
      <button type="button" aria-label="Notepad" className="ml-1 flex w-10 items-center justify-center border-b-2 border-[#76b9ed]"><NotepadIcon /></button>
      <div className="ml-auto flex items-center">
        <button type="button" aria-label="Show hidden icons" className="flex w-6 justify-center"><Chevron dir="up" color="#fff" width={1} size={14} /></button>
        <button type="button" aria-label="Camera" className="flex w-6 justify-center">
          <svg width="16" height="18" viewBox="0 0 16 18" aria-hidden="true" fill="none" stroke="#fff" strokeWidth="1.200">
            <rect x="3" y="5" width="7" height="8" rx="1" /><path d="M10 8l3-2v6l-3-2M4 2.500c2-1.500 5-1.500 7 0M4 15.500c2 1.500 5 1.500 7 0" />
          </svg>
        </button>
        <button type="button" aria-label="Network" className="flex w-6 justify-center">
          <svg width="17" height="16" viewBox="0 0 17 16" aria-hidden="true" fill="none" stroke="#fff">
            <path d="M6 3.500h10.500v7h-12V6.500M9.500 10.500v3M6 13.500h8M.5 2.500h4v3.500h-4zM2.500 6v7.500H5" />
          </svg>
        </button>
        <button type="button" aria-label="Volume" className="flex w-6 justify-center">
          <svg width="17" height="16" viewBox="0 0 17 16" aria-hidden="true" fill="none" stroke="#fff">
            <path d="M.5 5.500h2.500L6.500 2.500v11L3 10.500H.500zM8.500 5.500c1.300 1.500 1.300 3.500 0 5M11 3.500c2.300 2.500 2.300 6.500 0 9M13.500 1.500c3.300 4 3.300 9 0 13" />
          </svg>
        </button>
        <time dateTime="2025-06-21T19:02" className="w-16 text-center text-[11px] leading-[18px]">7:02 PM<br />6/21/2025</time>
        <button type="button" aria-label="Notifications" className="flex w-10 justify-center">
          <svg width="17" height="17" viewBox="0 0 17 17" aria-hidden="true" fill="none" stroke="#fff"><path d="M.5 1.500h15.500v11h-5L8.300 15.500 5.500 12.500h-5z" /></svg>
        </button>
        <div className="ml-2 h-10 w-[5px] border-l border-[#5c6670]" />
      </div>
    </footer>
  );
}

export default function App() {
  return (
    <div className="flex h-screen flex-col overflow-hidden font-['Noto_Sans','Open_Sans',sans-serif]">
      <main className="relative flex-1 overflow-hidden bg-linear-to-r from-[#00adfb] via-[#00a4f4] via-45% to-[#003cb8] to-92%">
        <p className="absolute top-[381px] left-[3px] text-[11px] leading-[18px] text-white">f</p>
        <figure className="absolute top-[560px] left-0 flex w-[74px] flex-col items-center text-center text-[11px] leading-[15px] text-white [text-shadow:0_1px_2px_rgba(0,0,0,0.7)]">
          <svg width="38" height="38" viewBox="0 0 38 38" aria-hidden="true">
            <circle cx="19" cy="17" r="18" fill="#2a9d4b" /><path d="M19 35A18 18 0 0 0 37 17H19z" fill="#fbc116" /><circle cx="19" cy="17" r="8" fill="#1a73e8" stroke="#fff" strokeWidth="2" />
          </svg>
          <figcaption>Google<br />Chrome</figcaption>
        </figure>
        {windows.map((item) => (
          <ExplorerWindow key={item.place} {...item} />
        ))}
        <Watermark />
      </main>
      <Taskbar />
    </div>
  );
}
